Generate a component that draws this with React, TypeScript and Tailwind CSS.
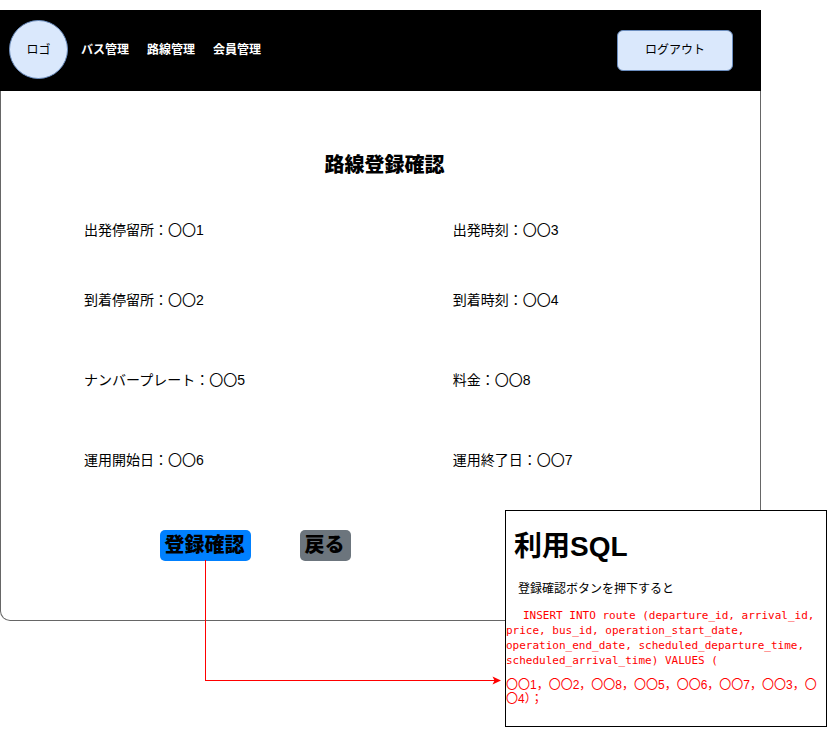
const navItems = ["バス管理", "路線管理", "会員管理"];

const fields = [
  { label: "出発停留所", value: "〇〇1" },
  { label: "出発時刻", value: "〇〇3" },
  { label: "到着停留所", value: "〇〇2" },
  { label: "到着時刻", value: "〇〇4" },
  { label: "ナンバープレート", value: "〇〇5" },
  { label: "料金", value: "〇〇8" },
  { label: "運用開始日", value: "〇〇6" },
  { label: "運用終了日", value: "〇〇7" },
];

function Header() {
  return (
    <header className="flex h-[81px] items-center justify-between bg-black pr-7 pl-[9px] text-xs">
      <div className="flex items-center pb-0.5">
        <a
          href="#"
          className="flex size-[59px] shrink-0 items-center justify-center rounded-full border border-[#6c8ebf] bg-[#dae8fc]"
        >
          ロゴ
        </a>
        <nav className="ml-[13px] flex gap-[18px] font-bold text-white">
          {navItems.map((item) => (
            <a key={item} href="#">
              {item}
            </a>
          ))}
        </nav>
      </div>
      <button
        type="button"
        className="h-[41px] w-[116px] rounded-md border border-[#6c8ebf] bg-[#dae8fc] pb-0.5"
      >
        ログアウト
      </button>
    </header>
  );
}

function Confirmation() {
  return (
    <main className="rounded-b-[10px] border-x border-b border-[#666666] pt-[60px] pb-[59px]">
      <h1 className="pl-2 text-center text-xl/7 font-black">路線登録確認</h1>
      <dl className="mt-[41px] grid grid-cols-[6fr_5fr] grid-rows-[70px_80px_80px_20px] pl-[83px] text-sm/5">
        {fields.map(({ label, value }) => (
          <div key={label} className="flex">
            <dt>{label}：</dt>
            <dd>{value}</dd>
          </div>
        ))}
      </dl>
      <div className="mt-[60px] flex gap-[49px] pl-[159px] text-xl/7 font-black">
        <button type="button" className="h-[31px] w-[91px] rounded-[5px] bg-[#0080ff] pr-0.5 pb-0.5">
          登録確認
        </button>
        <button type="button" className="h-[31px] w-[51px] rounded-[5px] bg-[#6c757d] pr-0.5 pb-0.5">
          戻る
        </button>
      </div>
    </main>
  );
}

function SqlNote() {
  return (
    <aside className="absolute top-[510px] right-1 w-[322px] border border-black bg-white pt-5 pb-5">
      <h2 className="pl-2 text-[28px]/8 font-bold">利用SQL</h2>
      <p className="mt-[17px] pl-3 text-xs/[18px]">登録確認ボタンを押下すると</p>
      <p className="mt-[10px] indent-[17px] font-['DejaVu_Sans_Mono',monospace] text-[11px]/[15px] text-[#ff0000]">
        INSERT INTO route (departure_id, arrival_id, price, bus_id, operation_start_date,
        operation_end_date, scheduled_departure_time, scheduled_arrival_time) VALUES (
      </p>
      <p className="mt-[10px] text-xs/[14px] text-[#ff0000]">
        〇〇1，〇〇2，〇〇8，〇〇5，〇〇6，〇〇7，〇〇3，〇〇4）；
      </p>
    </aside>
  );
}

/* Line from the confirm button to the SQL note */
function Connector() {
  return (
    <div className="pointer-events-none absolute top-[560px] right-[331px] left-[205px] flex h-[121px] flex-col">
      <div className="w-px grow bg-[#ff0000]" />
      <div className="h-px bg-[#ff0000]" />
      <svg
        className="absolute -right-px -bottom-1"
        width="9"
        height="9"
        viewBox="0 0 9 9"
        aria-hidden="true"
      >
        <path d="M9 4.5 L0.5 8.5 L2.5 4.5 L0.5 0.5 Z" fill="#ff0000" />
      </svg>
    </div>
  );
}

export default function App() {
  return (
    <div
      lang="ja"
      className="relative min-h-screen bg-white pt-[10px] pr-[70px] font-['Liberation_Sans','Noto_Sans_CJK_JP',sans-serif] text-black"
    >
      <Header />
      <Confirmation />
      <Connector />
      <SqlNote />
    </div>
  );
}
